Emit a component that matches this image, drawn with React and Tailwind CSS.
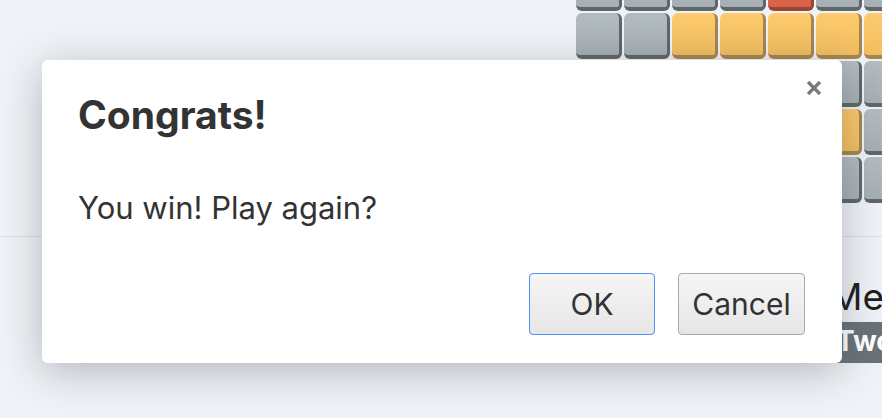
const GRAY = 'g';
const YELLOW = 'y';
const RED = 'r';

// rows of the board that show behind the dialog (columns from x=576)
const BOARD = [
  [GRAY, GRAY, GRAY, GRAY, RED, GRAY, GRAY],
  [GRAY, GRAY, YELLOW, YELLOW, YELLOW, YELLOW, YELLOW],
  [GRAY, GRAY, GRAY, GRAY, GRAY, GRAY, GRAY],
  [GRAY, GRAY, GRAY, GRAY, GRAY, YELLOW, GRAY],
  [GRAY, GRAY, GRAY, GRAY, GRAY, GRAY, GRAY],
];

const TILE_CLASS = {
  g: 'bg-gradient-to-b from-[#b3bcc1] to-[#a6afb4] border-[#5f676a]',
  y: 'bg-gradient-to-b from-[#fdca6e] to-[#f3be60] border-[#a6864f]',
  r: 'bg-gradient-to-b from-[#e56d50] to-[#d9634a] border-[#9c4432]',
};

function Tile({ kind }) {
  return (
    <div
      className={`shrink-0 w-[46px] h-[46px] rounded-[6px] border-r-[3px] border-b-[4px] ${TILE_CLASS[kind]}`}
    />
  );
}

function CloseIcon() {
  return (
    <svg width="16" height="16" viewBox="0 0 16 16">
      <path
        d="M2 2 L14 14 M14 2 L2 14"
        stroke="#7b7b7b"
        strokeWidth="3.2"
        strokeLinecap="butt"
      />
    </svg>
  );
}

export default function App() {
  return (
    <div
      className="relative w-[882px] h-[418px] overflow-hidden bg-[#eff2f6] text-[#333]"
      style={{ fontFamily: 'Inter, "Noto Sans", sans-serif' }}
    >
      {/* board */}
      <div className="h-[237px] overflow-hidden border-b border-[#d9dee3]">
        <div className="ml-[576px] mt-[-35px] flex flex-col gap-[2px]">
          {BOARD.map((row, i) => (
            <div key={i} className="flex gap-[2px]">
              {row.map((kind, j) => (
                <Tile key={j} kind={kind} />
              ))}
            </div>
          ))}
        </div>
      </div>

      {/* player header */}
      <div className="ml-[829px] mt-[36px] flex flex-col items-start">
        <div className="text-[37px] leading-[48px] text-[#1f1f1f] whitespace-nowrap">Me</div>
        <div className="-ml-[8px] mt-[1px] h-[41px] w-[80px] rounded-bl-[6px] bg-[#6b7379] pl-[15px] text-[28px] font-bold leading-[38px] text-white">
          Two
        </div>
      </div>

      {/* dialog */}
      <div className="absolute left-[42px] top-[60px] w-[800px] h-[303px] rounded-[6px] bg-white shadow-[0_8px_40px_rgba(40,50,60,0.3)] flex flex-col">
        <button type="button" className="absolute right-[20px] top-[20px]">
          <CloseIcon />
        </button>
        <h2 className="pl-[36px] pt-[32px] text-[39px] font-bold leading-[46px] text-[#333]">
          Congrats!
        </h2>
        <p className="pl-[36px] mt-[51px] text-[31px] leading-[38px] text-[#333]">
          You win! Play again?
        </p>
        <div className="mt-auto mb-[28px] mr-[37px] flex justify-end gap-[23px]">
          <button
            type="button"
            className="w-[126px] h-[62px] rounded-[4px] border-[1.5px] border-[#4d90f0] bg-gradient-to-b from-[#f6f6f6] to-[#e6e6e6] text-[30px] text-[#333]"
          >
            OK
          </button>
          <button
            type="button"
            className="w-[127px] h-[62px] rounded-[4px] border border-[#a9a9a9] bg-gradient-to-b from-[#f6f6f6] to-[#e6e6e6] text-[30px] text-[#333]"
          >
            Cancel
          </button>
        </div>
      </div>
    </div>
  );
}
